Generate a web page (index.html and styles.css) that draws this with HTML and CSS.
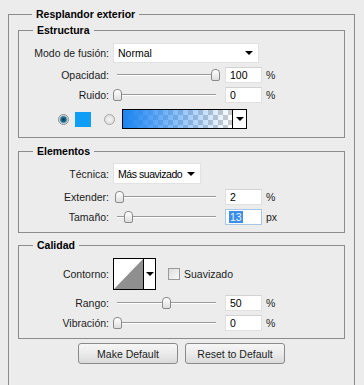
FILE: index.html
```html
<!DOCTYPE html>
<html>
<head>
<meta charset="utf-8">
<link rel="stylesheet" href="styles.css">
</head>
<body>
<fieldset class="panel">
  <legend>Resplandor exterior</legend>

  <fieldset class="group g1">
    <legend>Estructura</legend>
    <div class="row h20 m6">
      <span class="label">Modo de fusión:</span>
      <div class="select sel-mode"><span>Normal</span><i class="caret"></i></div>
    </div>
    <div class="row h16 m4">
      <span class="label">Opacidad:</span>
      <div class="slider"><div class="thumb" style="left:98px"></div></div>
      <div class="field">100</div><span class="unit">%</span>
    </div>
    <div class="row h16 m4">
      <span class="label">Ruido:</span>
      <div class="slider"><div class="thumb" style="left:0px"></div></div>
      <div class="field">0</div><span class="unit">%</span>
    </div>
    <div class="row h20 m6 colorrow">
      <span class="radio on"></span>
      <span class="swatch"></span>
      <span class="radio off"></span>
      <div class="gradient"><div class="grad-fill"></div><div class="grad-btn"><i class="caret"></i></div></div>
    </div>
  </fieldset>

  <fieldset class="group g2">
    <legend>Elementos</legend>
    <div class="row h21 m5">
      <span class="label">Técnica:</span>
      <div class="select sel-tech"><span class="tight">Más suavizado</span><i class="caret"></i></div>
    </div>
    <div class="row h16 m5">
      <span class="label">Extender:</span>
      <div class="slider"><div class="thumb" style="left:2px"></div></div>
      <div class="field">2</div><span class="unit">%</span>
    </div>
    <div class="row h16 m4">
      <span class="label">Tamaño:</span>
      <div class="slider"><div class="thumb" style="left:11px"></div></div>
      <div class="field focus"><span class="sel">13</span></div><span class="unit">px</span>
    </div>
  </fieldset>

  <fieldset class="group g3">
    <legend>Calidad</legend>
    <div class="row h32 m6">
      <span class="label">Contorno:</span>
      <div class="contour">
        <svg class="curve" width="29" height="30" viewBox="0 0 29 30"><rect width="29" height="30" fill="#fff"/><polygon points="0,30 29,0 29,30" fill="#8f8f8f"/></svg>
        <div class="contour-btn"><i class="caret"></i></div>
      </div>
      <span class="check"></span><span class="check-label">Suavizado</span>
    </div>
    <div class="row h16 m5">
      <span class="label">Rango:</span>
      <div class="slider"><div class="thumb" style="left:49px"></div></div>
      <div class="field">50</div><span class="unit">%</span>
    </div>
    <div class="row h16 m4">
      <span class="label">Vibración:</span>
      <div class="slider"><div class="thumb" style="left:0px"></div></div>
      <div class="field">0</div><span class="unit">%</span>
    </div>
  </fieldset>

  <div class="buttons">
    <button class="btn">Make Default</button>
    <button class="btn">Reset to Default</button>
  </div>
</fieldset>
</body>
</html>
```

FILE: styles.css
```css
html, body {
  margin: 0;
  padding: 0;
  background: #ececec;
  font-family: "Liberation Sans", Arial, sans-serif;
  font-size: 10.5px;
  color: #1c1c1c;
}
body {
  height: 385px;
  overflow: hidden;
}

.panel {
  box-sizing: border-box;
  width: 347px;
  margin: 7px 0 0 8px;
  padding: 0 9px 30px 9px;
  border: 1px solid #8c8c8c;
  min-width: 0;
}

legend {
  font-weight: bold;
  color: #000;
  line-height: 14px;
  height: 14px;
  padding: 0 4px;
  margin-left: 14px;
}

.group {
  margin: 0;
  padding: 0 0 7px 0;
  border: 1px solid #8c8c8c;
  min-width: 0;
}

.g1 { margin-top: 2px; padding-bottom: 8px; }
.g2 { margin-top: 6px; }
.g3 { margin-top: 5px; }

.row {
  display: flex;
  align-items: center;
  white-space: nowrap;
}
.h16 { height: 16px; }
.h20 { height: 20px; }
.h21 { height: 21px; }
.h32 { height: 32px; }
.m4 { margin-top: 4px; }
.m5 { margin-top: 5px; }
.m6 { margin-top: 6px; }

.label {
  width: 90px;
  margin-right: 4px;
  text-align: right;
  white-space: nowrap;
}

.select {
  box-sizing: border-box;
  height: 100%;
  background: #fff;
  border: 1px solid #e2e2e2;
  display: flex;
  align-items: center;
  justify-content: space-between;
  padding: 0 5px 0 4px;
  color: #000;
  white-space: nowrap;
}
.sel-mode { width: 146px; }
.sel-tech { width: 88px; }
.tight { letter-spacing: -0.45px; }

.caret {
  display: block;
  flex: none;
  width: 0;
  height: 0;
  border-left: 4px solid transparent;
  border-right: 4px solid transparent;
  border-top: 4px solid #000;
}

.slider {
  position: relative;
  flex: none;
  width: 107px;
  height: 16px;
  margin-right: 5px;
}
.slider::before {
  content: "";
  position: absolute;
  left: 4px;
  right: 4px;
  top: 7px;
  height: 1px;
  background: #9a9a9a;
  box-shadow: 0 1px 0 #fff;
}
.thumb {
  position: absolute;
  top: 2px;
  width: 9px;
  height: 12px;
  box-sizing: border-box;
  border: 1px solid #8a8a8a;
  border-radius: 4px 4px 2px 2px;
  background: linear-gradient(#ffffff, #dedede);
}

.field {
  box-sizing: border-box;
  flex: none;
  width: 37px;
  height: 16px;
  background: #fff;
  border: 1px solid #e0e0e0;
  border-top-color: #d2d2d2;
  padding-left: 4px;
  line-height: 14px;
  color: #000;
}
.field.focus {
  border-color: #a9c6e6;
}
.sel {
  display: inline-block;
  background: #3d8ee8;
  color: #e8f2ff;
  line-height: 12px;
  padding: 0 1px;
  margin-left: -1px;
}
.unit {
  margin-left: 4px;
  color: #1c1c1c;
}

.colorrow .radio:first-child { margin-left: 39px; }
.radio {
  box-sizing: border-box;
  flex: none;
  width: 11px;
  height: 11px;
  border-radius: 50%;
  border: 1px solid #8e8e8e;
}
.radio.on {
  background: radial-gradient(circle, #0d3a4e 0, #1f6a8a 2.5px, #7fb0c8 3.5px, #e9e9e9 4.5px);
}
.radio.off {
  margin-left: 13px;
  border-color: #a6a6a6;
  background: radial-gradient(circle, #f6f6f6 0, #dcdcdc 5px);
}
.swatch {
  flex: none;
  width: 16px;
  height: 15px;
  margin-left: 6px;
  background: #0f9ef6;
}
.gradient {
  box-sizing: border-box;
  flex: none;
  width: 125px;
  height: 20px;
  margin-left: 7px;
  border: 1px solid #000;
  display: flex;
}
.grad-fill {
  flex: 1;
  background:
    linear-gradient(to right, #1a84f0 0%, rgba(40, 140, 245, 0.75) 30%, rgba(60, 150, 245, 0) 100%),
    repeating-conic-gradient(#cccccc 0 25%, #ffffff 0 50%) 0 0 / 10px 10px;
}
.grad-btn {
  width: 13px;
  border-left: 1px solid #000;
  background: #fff;
  display: flex;
  align-items: center;
  justify-content: center;
}

.contour {
  box-sizing: border-box;
  flex: none;
  width: 43px;
  height: 32px;
  border: 1px solid #000;
  display: flex;
}
.curve { display: block; }
.contour-btn {
  flex: 1;
  border-left: 1px solid #000;
  background: #fff;
  display: flex;
  align-items: center;
  justify-content: center;
}
.check {
  box-sizing: border-box;
  flex: none;
  width: 12px;
  height: 12px;
  margin-left: 12px;
  border: 1px solid #9a9a9a;
  background: linear-gradient(135deg, #dedede, #f8f8f8);
}
.check-label {
  margin-left: 4px;
}

.buttons {
  display: flex;
  justify-content: center;
  gap: 7px;
  margin-top: 4px;
}
.btn {
  box-sizing: border-box;
  width: 100px;
  height: 21px;
  padding: 0;
  border: 1px solid #8a8a8a;
  border-radius: 3px;
  background: linear-gradient(#f6f6f6 0%, #ebebeb 50%, #dadada 100%);
  font-family: "Liberation Sans", Arial, sans-serif;
  font-size: 10.5px;
  color: #1c1c1c;
}
```
